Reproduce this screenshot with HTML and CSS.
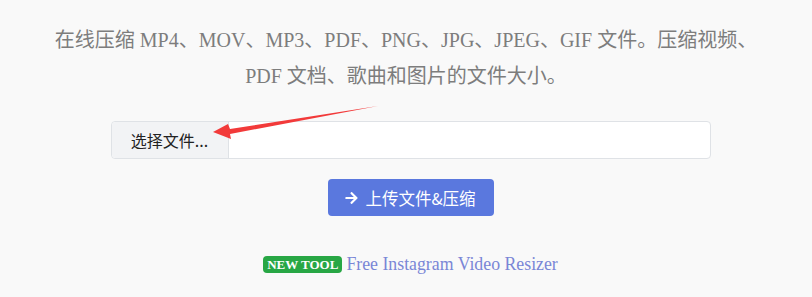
FILE: index.html
```html
<!DOCTYPE html>
<html lang="zh">
<head>
<meta charset="utf-8">
<link rel="stylesheet" href="styles.css">
</head>
<body>
<main class="page">
  <p class="lead">在线压缩 MP4、MOV、MP3、PDF、PNG、JPG、JPEG、GIF 文件。压缩视频、<br>PDF 文档、歌曲和图片的文件大小。</p>
  <div class="tools">
    <div class="file-group">
      <span class="file-btn">选择文件...</span>
      <span class="file-name"></span>
      <svg class="pointer" width="180" height="40" viewBox="0 0 180 40">
        <polygon points="165,0 17,23 15,18 0,26 18,33 17,28" fill="#f23a3a"/>
      </svg>
    </div>
    <button class="upload" type="button">
      <svg class="arrow-icon" width="13" height="14" viewBox="0 0 448 512"><path fill="#fff" d="M190.5 66.9l22.2-22.2c9.4-9.4 24.6-9.4 33.9 0L441 239c9.4 9.4 9.4 24.6 0 33.9L246.6 467.3c-9.4 9.4-24.6 9.4-33.9 0l-22.2-22.2c-9.5-9.5-9.3-25 .4-34.3L311.4 296H24c-13.3 0-24-10.7-24-24v-32c0-13.3 10.7-24 24-24h287.4L190.9 101.2c-9.8-9.3-10-24.8-.4-34.3z"/></svg>
      <span>上传文件&amp;压缩</span>
    </button>
    <p class="promo"><span class="badge">NEW TOOL</span> <a class="promo-link" href="#">Free Instagram Video Resizer</a></p>
  </div>
</main>
</body>
</html>
```

FILE: styles.css
```css
* { box-sizing: border-box; }
html, body { margin: 0; padding: 0; }
body {
  background: #f9f9f9;
  width: 812px;
  height: 297px;
  overflow: hidden;
  font-family: "Liberation Serif", "Noto Sans CJK SC", serif;
}
.page { padding-top: 22px; }
.lead {
  margin: 0;
  text-align: center;
  font-size: 20px;
  line-height: 36px;
  color: #7d7d7d;
}
.tools {
  display: flex;
  flex-direction: column;
  align-items: center;
  padding-left: 9px;
}
.file-group {
  position: relative;
  margin-top: 27px;
  width: 600px;
  height: 38px;
  display: flex;
  border: 1px solid #dfe2e6;
  border-radius: 4px;
  background: #fff;
  font-family: "Noto Sans CJK SC", "Noto Sans", sans-serif;
}
.file-btn {
  width: 117px;
  background: #f2f3f5;
  border-right: 1px solid #dfe2e6;
  border-radius: 4px 0 0 4px;
  display: flex;
  align-items: center;
  justify-content: center;
  font-size: 16px;
  color: #222;
}
.file-name { flex: 1; }
.pointer {
  position: absolute;
  left: 101px;
  top: -16px;
}
.upload {
  margin-top: 20px;
  width: 166px;
  height: 37px;
  border: 0;
  border-radius: 4px;
  background: #5a78de;
  color: #fff;
  font-family: "Noto Sans CJK SC", "Noto Sans", sans-serif;
  font-size: 16.5px;
  display: flex;
  align-items: center;
  justify-content: center;
  gap: 7px;
  padding: 0;
}
.promo {
  margin: 38px 0 0;
  display: flex;
  align-items: center;
  gap: 4px;
}
.badge {
  background: #28a745;
  color: #fff;
  font-weight: bold;
  font-size: 13px;
  line-height: 17px;
  padding: 0 4px;
  border-radius: 4px;
}
.promo-link {
  color: #7a86d6;
  text-decoration: none;
  font-size: 17.8px;
}
```
